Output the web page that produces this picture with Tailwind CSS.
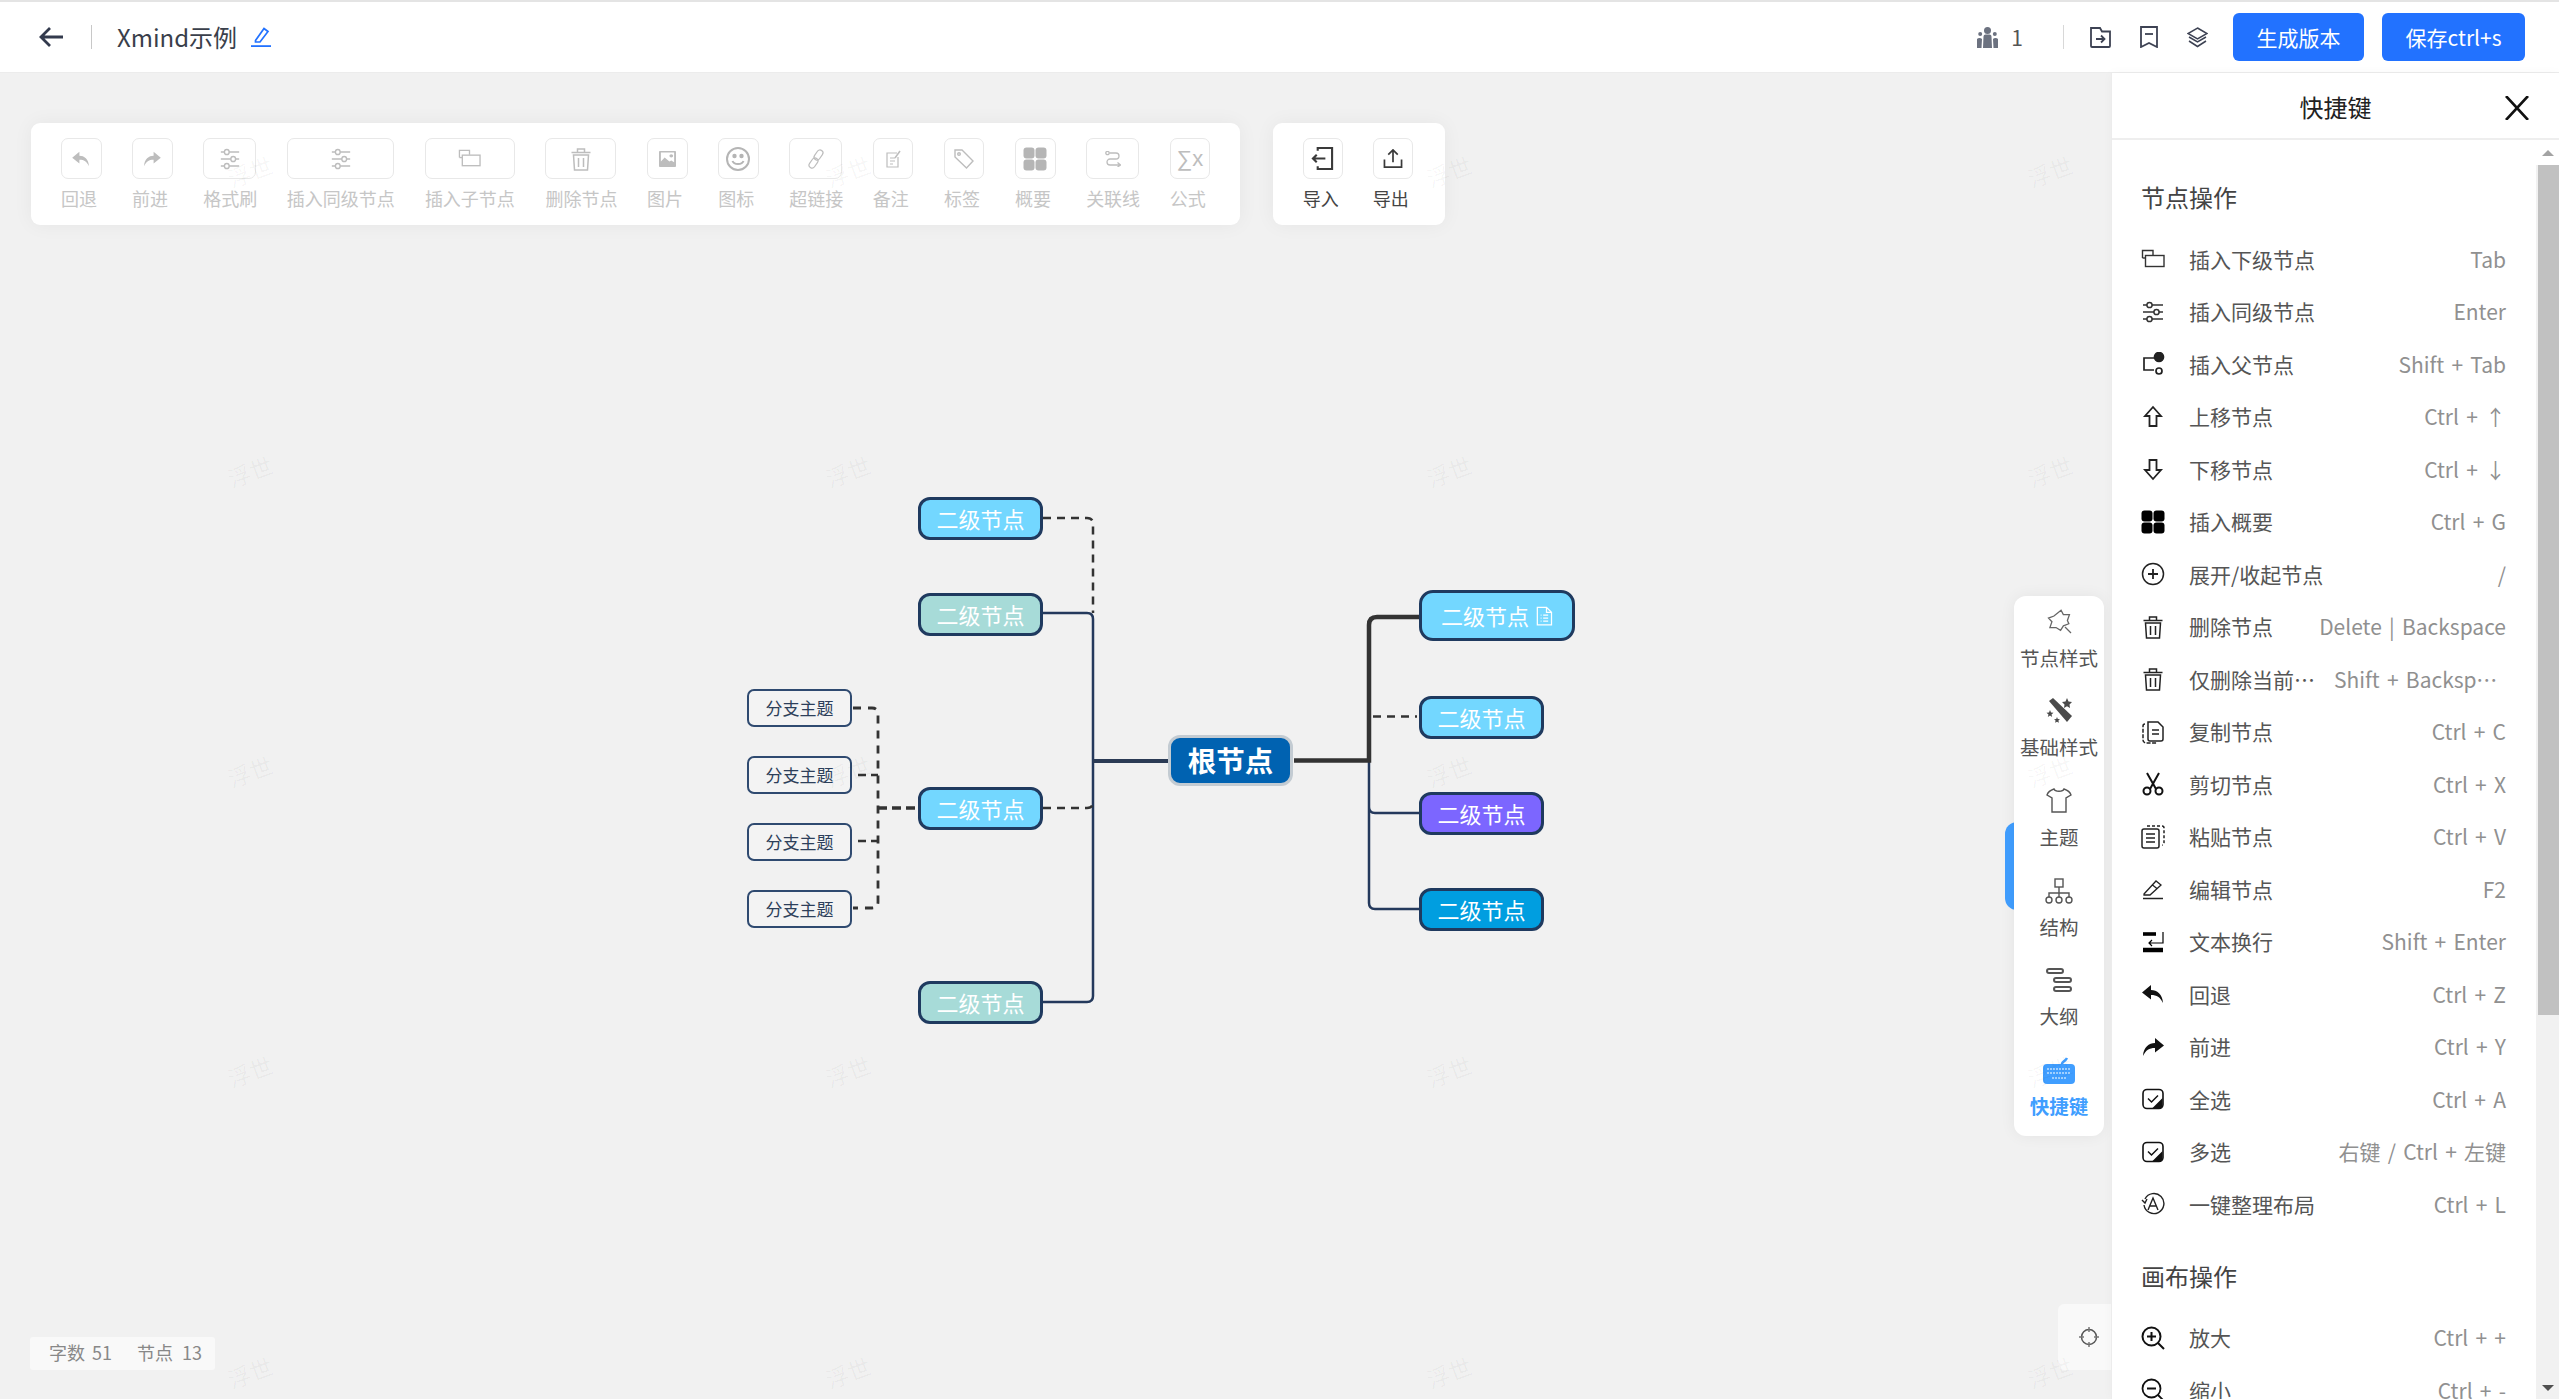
<!DOCTYPE html>
<html lang="zh-CN">
<head>
<meta charset="utf-8">
<title>Xmind示例</title>
<script src="https://cdn.jsdelivr.net/npm/@tailwindcss/browser@4"></script>
</head>
<body class="m-0">
<svg class="absolute w-0 h-0" aria-hidden="true">
  <defs>
    <symbol id="i-child" viewBox="0 0 24 24"><g fill="none" stroke="currentColor" stroke-width="1.400"><path d="M1.500 11V3.500H12V8"/><rect x="4.500" y="8.500" width="18.500" height="11"/><path d="M1.500 11h3"/></g></symbol>
    <symbol id="i-sliders" viewBox="0 0 24 24"><g fill="none" stroke="currentColor" stroke-width="1.500"><path d="M2 5h4M11 5h11M2 12h11M18 12h4M2 19h4M11 19h11"/><circle cx="8.500" cy="5" r="2.600"/><circle cx="15.500" cy="12" r="2.600"/><circle cx="8.500" cy="19" r="2.600"/></g></symbol>
    <symbol id="i-trash" viewBox="0 0 24 24"><g fill="none" stroke="currentColor" stroke-width="1.500"><path d="M2.500 5.500h19M8.500 5.500V2h7v3.500M4.500 8l1 15h13l1-15zM9.500 11v9M14.500 11v9"/></g></symbol>
    <symbol id="i-grid" viewBox="0 0 24 24"><g fill="currentColor"><rect x="0.500" y="0.500" width="11" height="11" rx="3"/><rect x="12.500" y="0.500" width="11" height="11" rx="3"/><rect x="0.500" y="12.500" width="11" height="11" rx="3"/><rect x="12.500" y="12.500" width="11" height="11" rx="3"/></g></symbol>
    <symbol id="i-undo" viewBox="0 0 24 20"><path fill="currentColor" d="M10 1 1 8.500l9 7V11c6 0 9 2 12 8C21.500 10 16 6 10 6z"/></symbol>
    <symbol id="i-redo" viewBox="0 0 24 20"><path fill="currentColor" d="M14 1l9 7.500-9 7V11c-6 0-9 2-12 8C2.500 10 8 6 14 6z"/></symbol>
    <symbol id="i-check" viewBox="0 0 24 24"><rect x="2" y="2.500" width="20" height="19" rx="4" fill="none" stroke="currentColor" stroke-width="1.600"/><path d="M7 11.500l3.500 3.500 6.500-6.500" fill="none" stroke="currentColor" stroke-width="1.500"/><path fill="currentColor" d="M21.500 11v7a3.500 3.500 0 0 1-3.500 3.500H11z"/></symbol>
    <symbol id="i-doc" viewBox="0 0 24 24"><path d="M4 1.500h11l6 6v15H4z M15 1.500v6h6 M8 11h1 M11 11h6 M8 14.500h1 M11 14.500h6 M8 18h1 M11 18h6" fill="none" stroke="currentColor" stroke-width="1.500"/></symbol>
  </defs>
</svg>

<div class="relative w-[2559px] h-[1399px] overflow-hidden flex flex-col bg-[#f1f1f1] border-t-2 border-[#e4e4e4] font-['Noto_Sans_CJK_SC','Noto_Sans',sans-serif]">

  <!-- header -->
  <header class="h-[71px] shrink-0 bg-white border-b border-[#ececec] flex items-center pl-[39px] pr-[34px] text-[#333]">
    <svg class="w-6 h-6 text-[#333a4d]" viewBox="0 0 24 24" fill="none" stroke="currentColor" stroke-width="2.800"><path d="M24 12H2M11 3l-9 9 9 9"/></svg>
    <span class="w-px h-6 bg-[#c8c8c8] ml-[28px]"></span>
    <span class="ml-[25px] text-[24px] leading-8 text-[#3a3f4b]">Xmind示例</span>
    <svg class="ml-[14px] w-5 h-5 text-[#2272ff]" viewBox="0 0 20 20" fill="none" stroke="currentColor" stroke-width="1.700"><path d="M4.500 13.500 13 1.500l4 3-8 10.500H4.500z"/><path d="M0 19.200h20" stroke-width="2"/></svg>

    <div class="ml-auto flex items-center">
      <svg class="w-[21px] h-[21px] text-[#6c7280]" viewBox="0 0 21 21" fill="currentColor"><circle cx="10.500" cy="3.500" r="3.500"/><path d="M6.500 9.500a2 2 0 0 1 2-2h4a2 2 0 0 1 2 2L15 21H6z"/><circle cx="3.200" cy="7" r="2"/><circle cx="17.800" cy="7" r="2"/><path d="M0 12a3 2.500 0 0 1 5 0l-.5 9H0zM16 12a3 2.500 0 0 1 5 0v9h-4.500z"/></svg>
      <span class="ml-[13px] text-[21px] leading-7 text-[#555]">1</span>
      <span class="ml-[40px] w-px h-6 bg-[#d8d8d8]"></span>
      <svg class="ml-[26px] w-[21px] h-[21px] text-[#3d4253]" viewBox="0 0 21 21" fill="none" stroke="currentColor" stroke-width="1.800"><path d="M1 1h9l2 3.500h8V19a1 1 0 0 1-1 1H2a1 1 0 0 1-1-1z"/><path d="M6 12h8M11 8.500l3.500 3.500-3.500 3.500"/></svg>
      <svg class="ml-[29px] w-[18px] h-[22px] text-[#3d4253]" viewBox="0 0 18 22" fill="none" stroke="currentColor" stroke-width="1.800"><path d="M1 1h16v20l-8-4-8 4z"/><path d="M5 8h8"/></svg>
      <svg class="ml-[29px] w-[21px] h-[21px] text-[#3d4253]" viewBox="0 0 21 21" fill="none" stroke="currentColor" stroke-width="1.500"><path d="M10.500 1 20 6.500 10.500 12 1 6.500z"/><path d="M2 10l8.500 5L19 10M2 14l8.500 5.500L19 14"/></svg>
      <button class="ml-[25px] w-[131px] h-[48px] rounded-[6px] bg-[#2272ff] text-white text-[21px] pt-[1px]">生成版本</button>
      <button class="ml-[18px] w-[143px] h-[48px] rounded-[6px] bg-[#2272ff] text-white text-[21px] pt-[1px]">保存ctrl+s</button>
    </div>
  </header>

  <div class="flex-1 min-h-0 flex">
    <!-- canvas -->
    <main class="relative flex-1 min-w-0 bg-[#f1f1f1]">
      <!-- connectors -->
      <svg class="absolute inset-0 w-[2111px] h-[1326px]" viewBox="0 73 2111 1326" fill="none">
        <path d="M1043 518h44q6 0 6 6v89" stroke="#333" stroke-width="2.500" stroke-dasharray="8 6"/>
        <path d="M1043 613h44q6 0 6 6v377q0 6-6 6h-44" stroke="#24395c" stroke-width="2.500"/>
        <path d="M1169 761h-76" stroke="#2b3b55" stroke-width="3.800"/>
        <path d="M1043 808h44q6 0 6-6" stroke="#333" stroke-width="2.500" stroke-dasharray="8 6"/>
        <path d="M853 708h19q6 0 6 6v188q0 6-6 6h-19" stroke="#333" stroke-width="2.800" stroke-dasharray="8 7"/>
        <path d="M858 775h20M858 841h20" stroke="#333" stroke-width="2.500" stroke-dasharray="8 5"/>
        <path d="M878 808h40" stroke="#333" stroke-width="3.500" stroke-dasharray="9 5"/>
        <path d="M1369 761v142q0 6 6 6h44M1369 761v46q0 6 6 6h44" stroke="#24395c" stroke-width="2.500"/>
        <path d="M1294 760.500h75V625q0-8 8-8h42" stroke="#333" stroke-width="4.500"/>
        <path d="M1373 716.500h44" stroke="#333" stroke-width="2.500" stroke-dasharray="8 6"/>
      </svg>

      <!-- nodes -->
      <div class="absolute left-[918px] top-[424px] w-[125px] h-[43px] rounded-[12px] border-[3px] border-[#1f3a5f] bg-[#73d7ff] text-white text-[22px] flex items-center justify-center">二级节点</div>
      <div class="absolute left-[918px] top-[520px] w-[125px] h-[43px] rounded-[12px] border-[3px] border-[#1f3a5f] bg-[#a7dbd8] text-white text-[22px] flex items-center justify-center">二级节点</div>
      <div class="absolute left-[918px] top-[714px] w-[125px] h-[43px] rounded-[12px] border-[3px] border-[#1f3a5f] bg-[#73d7ff] text-white text-[22px] flex items-center justify-center">二级节点</div>
      <div class="absolute left-[918px] top-[908px] w-[125px] h-[43px] rounded-[12px] border-[3px] border-[#1f3a5f] bg-[#a7dbd8] text-white text-[22px] flex items-center justify-center">二级节点</div>

      <div class="absolute left-[747px] top-[616px] w-[105px] h-[38px] rounded-[7px] border-2 border-[#2f4a70] bg-[#f3f3f3] text-[#2d3f5a] text-[17px] flex items-center justify-center">分支主题</div>
      <div class="absolute left-[747px] top-[683px] w-[105px] h-[38px] rounded-[7px] border-2 border-[#2f4a70] bg-[#f3f3f3] text-[#2d3f5a] text-[17px] flex items-center justify-center">分支主题</div>
      <div class="absolute left-[747px] top-[750px] w-[105px] h-[38px] rounded-[7px] border-2 border-[#2f4a70] bg-[#f3f3f3] text-[#2d3f5a] text-[17px] flex items-center justify-center">分支主题</div>
      <div class="absolute left-[747px] top-[817px] w-[105px] h-[38px] rounded-[7px] border-2 border-[#2f4a70] bg-[#f3f3f3] text-[#2d3f5a] text-[17px] flex items-center justify-center">分支主题</div>

      <div class="absolute left-[1168px] top-[662px] w-[125px] h-[51px] rounded-[12px] border-[3px] border-[#c3cbd2] bg-[#0062b1] text-white font-bold text-[28.500px] flex items-center justify-center">根节点</div>

      <div class="absolute left-[1419px] top-[517px] w-[156px] h-[51px] rounded-[14px] border-[3px] border-[#1f3a5f] bg-[#73d7ff] text-white text-[22px] flex items-center pl-[19px] gap-[5px]">二级节点<svg class="w-5 h-[22px]" viewBox="0 0 24 24"><use href="#i-doc"/></svg></div>
      <div class="absolute left-[1419px] top-[623px] w-[125px] h-[43px] rounded-[12px] border-[3px] border-[#1f3a5f] bg-[#73d7ff] text-white text-[22px] flex items-center justify-center">二级节点</div>
      <div class="absolute left-[1419px] top-[719px] w-[125px] h-[43px] rounded-[12px] border-[3px] border-[#1f3a5f] bg-[#7c66ff] text-white text-[22px] flex items-center justify-center">二级节点</div>
      <div class="absolute left-[1419px] top-[815px] w-[125px] h-[43px] rounded-[12px] border-[3px] border-[#1f3a5f] bg-[#009ee0] text-white text-[22px] flex items-center justify-center">二级节点</div>

      <!-- toolbars -->
      <div class="absolute left-[31px] top-[50px] flex gap-[32.500px]">
        <div class="h-[102px] rounded-[9px] bg-white shadow-[0_0_20px_rgba(0,0,0,0.05)] pl-[30px] pr-[30px] pt-[15px] flex gap-[30.600px] text-[18px] leading-6 text-[#c6c6c6]">
          <div class="w-[40.500px]"><div class="h-[41px] border border-[#e8e8e8] rounded-[7px] flex items-center justify-center text-[#bdbdbd]"><svg class="w-5 h-4" viewBox="0 0 24 20"><use href="#i-undo"/></svg></div><div class="mt-[7px] whitespace-nowrap">回退</div></div>
          <div class="w-[40.500px]"><div class="h-[41px] border border-[#e8e8e8] rounded-[7px] flex items-center justify-center text-[#bdbdbd]"><svg class="w-5 h-4" viewBox="0 0 24 20"><use href="#i-redo"/></svg></div><div class="mt-[7px] whitespace-nowrap">前进</div></div>
          <div class="w-[53px]"><div class="h-[41px] border border-[#e8e8e8] rounded-[7px] flex items-center justify-center text-[#bdbdbd]"><svg class="w-[22px] h-[24px]" viewBox="0 0 24 24" preserveAspectRatio="none"><use href="#i-sliders"/></svg></div><div class="mt-[7px] whitespace-nowrap">格式刷</div></div>
          <div class="w-[107.500px]"><div class="h-[41px] border border-[#e8e8e8] rounded-[7px] flex items-center justify-center text-[#bdbdbd]"><svg class="w-[22px] h-[24px]" viewBox="0 0 24 24" preserveAspectRatio="none"><use href="#i-sliders"/></svg></div><div class="mt-[7px] whitespace-nowrap">插入同级节点</div></div>
          <div class="w-[90px]"><div class="h-[41px] border border-[#e8e8e8] rounded-[7px] flex items-center justify-center text-[#bdbdbd]"><svg class="w-[23px] h-[23px]" viewBox="0 0 24 24"><use href="#i-child"/></svg></div><div class="mt-[7px] whitespace-nowrap">插入子节点</div></div>
          <div class="w-[71px]"><div class="h-[41px] border border-[#e8e8e8] rounded-[7px] flex items-center justify-center text-[#bdbdbd]"><svg class="w-6 h-6" viewBox="0 0 24 24"><use href="#i-trash"/></svg></div><div class="mt-[7px] whitespace-nowrap">删除节点</div></div>
          <div class="w-[40.500px]"><div class="h-[41px] border border-[#e8e8e8] rounded-[7px] flex items-center justify-center text-[#bdbdbd]"><svg class="w-[17px] h-[16px]" viewBox="0 0 18 20" preserveAspectRatio="none"><path fill="currentColor" fill-rule="evenodd" d="M1 0h16a1 1 0 0 1 1 1v18a1 1 0 0 1-1 1H1a1 1 0 0 1-1-1V1a1 1 0 0 1 1-1zM13 4a2 2 0 1 0 0 4 2 2 0 0 0 0-4zM2 13l4-5 5 5 2-1 3 2V2H2z"/></svg></div><div class="mt-[7px] whitespace-nowrap">图片</div></div>
          <div class="w-[40.500px]"><div class="h-[41px] border border-[#e8e8e8] rounded-[7px] flex items-center justify-center text-[#b5b5b5]"><svg class="w-6 h-6" viewBox="0 0 24 24" fill="none" stroke="currentColor" stroke-width="2"><circle cx="12" cy="12" r="11"/><path d="M6.500 14c1.500 4 9.500 4 11 0"/><circle cx="8.500" cy="9" r="1.200" fill="currentColor"/><circle cx="15.500" cy="9" r="1.200" fill="currentColor"/></svg></div><div class="mt-[7px] whitespace-nowrap">图标</div></div>
          <div class="w-[53px]"><div class="h-[41px] border border-[#e8e8e8] rounded-[7px] flex items-center justify-center text-[#bdbdbd]"><svg class="w-5 h-5" viewBox="0 0 20 20" fill="none" stroke="currentColor" stroke-width="1.200"><rect x="9.500" y="0.500" width="6" height="11" rx="3" transform="rotate(35 12.500 6)"/><rect x="4.500" y="8.500" width="6" height="11" rx="3" transform="rotate(35 7.500 14)"/></svg></div><div class="mt-[7px] whitespace-nowrap">超链接</div></div>
          <div class="w-[40.500px]"><div class="h-[41px] border border-[#e8e8e8] rounded-[7px] flex items-center justify-center text-[#bdbdbd]"><svg class="w-[15px] h-[18px]" viewBox="0 0 15 18" fill="none" stroke="currentColor" stroke-width="1.200"><path d="M11 3H1v14h11V7M4 8h5M4 11h5M4 14h3"/><path d="M14 1 9 8" stroke-width="1.500"/></svg></div><div class="mt-[7px] whitespace-nowrap">备注</div></div>
          <div class="w-[40.500px]"><div class="h-[41px] border border-[#e8e8e8] rounded-[7px] flex items-center justify-center text-[#bdbdbd]"><svg class="w-5 h-5" viewBox="0 0 20 20" fill="none" stroke="currentColor" stroke-width="1.400"><path d="M1 1h7l11 11-6.500 7L1 8z"/><circle cx="5" cy="5" r="1.300"/></svg></div><div class="mt-[7px] whitespace-nowrap">标签</div></div>
          <div class="w-[40.500px]"><div class="h-[41px] border border-[#e8e8e8] rounded-[7px] flex items-center justify-center text-[#b5b5b5]"><svg class="w-6 h-6" viewBox="0 0 24 24"><use href="#i-grid"/></svg></div><div class="mt-[7px] whitespace-nowrap">概要</div></div>
          <div class="w-[53px]"><div class="h-[41px] border border-[#e8e8e8] rounded-[7px] flex items-center justify-center text-[#bdbdbd]"><svg class="w-4 h-4" viewBox="0 0 16 16" fill="none" stroke="currentColor" stroke-width="1.300"><circle cx="2.500" cy="2" r="1.700"/><path d="M4.500 2H11a3 3 0 0 1 0 6H5a3 3 0 0 0 0 6h10M12.500 11.500l3 2.500-3 2"/></svg></div><div class="mt-[7px] whitespace-nowrap">关联线</div></div>
          <div class="w-[40.500px]"><div class="h-[41px] border border-[#e8e8e8] rounded-[7px] flex items-center justify-center text-[#bdbdbd] text-[22px] leading-none font-['Liberation_Sans',sans-serif]">∑x</div><div class="mt-[7px] whitespace-nowrap">公式</div></div>
        </div>
        <div class="h-[102px] w-[172px] rounded-[9px] bg-white shadow-[0_0_20px_rgba(0,0,0,0.05)] pl-[30px] pt-[15px] flex gap-[29.500px] text-[18px] leading-6 text-[#444]">
          <div class="w-[40.500px]"><div class="h-[41px] border border-[#e8e8e8] rounded-[7px] flex items-center justify-center"><svg class="w-[23px] h-[23px]" viewBox="0 0 24 24" fill="none" stroke="#3a3a3a" stroke-width="2.200"><path d="M7 4V1h15v22H7v-3M15 12H2M6 8l-4 4 4 4"/></svg></div><div class="mt-[7px] whitespace-nowrap">导入</div></div>
          <div class="w-[40.500px]"><div class="h-[41px] border border-[#e8e8e8] rounded-[7px] flex items-center justify-center"><svg class="w-5 h-[19px]" viewBox="0 0 20 20" fill="none" stroke="#3a3a3a" stroke-width="1.800"><path d="M10 14V1M5 6l5-5 5 5M1 11v8h18v-8"/></svg></div><div class="mt-[7px] whitespace-nowrap">导出</div></div>
        </div>
      </div>

      <!-- right rail -->
      <div class="absolute left-[2005px] top-[749px] w-[20px] h-[88px] rounded-l-[12px] bg-[#409eff]"></div>
      <nav class="absolute left-[2014px] top-[523px] w-[90px] h-[540px] rounded-[12px] bg-white shadow-[0_0_16px_rgba(0,0,0,0.06)] flex flex-col text-[19.500px] leading-6 text-[#555] text-center">
        <div class="h-[90px] flex flex-col items-center pt-[13px] gap-[11px]"><svg class="w-[26px] h-[26px]" viewBox="0 0 26 26" fill="none" stroke="#666" stroke-width="1.300"><path d="M13 1l3 4 6-1-1 6 2 3-5 3-2 5-5-2-6 1 1-6-4-3 5-3z" transform="rotate(10 13 13)"/><path d="M19 18l6 6"/></svg><span class="whitespace-nowrap">节点样式</span></div>
        <div class="h-[90px] flex flex-col items-center pt-[12px] gap-[11px]"><svg class="w-7 h-[26px]" viewBox="0 0 28 26" fill="#4a4a4a"><path d="M4 3l4-3 19 18-5 6z"/><path d="M22 0l1.500 3.500L27 4l-2.500 2.500.5 3.500-3-1.700-3 1.700.5-3.500L17 4l3.500-.5z"/><path d="M5 12l1 2.500 2.500.2-2 1.800.7 2.500L5 17.500 2.800 19l.7-2.500-2-1.800L4 14.500z"/><path d="M12 19l.8 2 2.200.2-1.600 1.400.5 2.200L12 23.700l-1.900 1.100.5-2.200L9 21.200l2.200-.2z"/></svg><span class="whitespace-nowrap">基础样式</span></div>
        <div class="h-[90px] flex flex-col items-center pt-[12px] gap-[12px]"><svg class="w-[26px] h-[25px]" viewBox="0 0 26 25" fill="none" stroke="#555" stroke-width="1.400"><path d="M8 1C9 4 17 4 18 1c3 1 6 3 7 6l-5 3v14H6V10L1 7c1-3 4-5 7-6z"/></svg><span>主题</span></div>
        <div class="h-[90px] flex flex-col items-center pt-[12px] gap-[11px]"><svg class="w-7 h-[26px]" viewBox="0 0 28 26" fill="none" stroke="#555" stroke-width="1.400"><rect x="10" y="1" width="8" height="8"/><path d="M14 9v6M4 19v-4h20v4M14 15v4"/><circle cx="4" cy="22" r="3"/><circle cx="14" cy="22" r="3"/><circle cx="24" cy="22" r="3"/></svg><span>结构</span></div>
        <div class="h-[90px] flex flex-col items-center pt-[12px] gap-[12px]"><svg class="w-[26px] h-[24px]" viewBox="0 0 26 24" fill="none" stroke="#555" stroke-width="2"><rect x="1" y="1" width="16" height="4" rx="2"/><rect x="8" y="10" width="17" height="4" rx="2"/><rect x="8" y="19" width="17" height="4" rx="2"/></svg><span>大纲</span></div>
        <div class="h-[90px] flex flex-col items-center pt-[11px] gap-[9px] text-[#409eff] font-bold"><svg class="w-[34px] h-[28px]" viewBox="0 0 34 28"><path d="M20 7c0-3 3-2 5-6" fill="none" stroke="#409eff" stroke-width="2.500"/><rect x="1" y="7" width="32" height="20" rx="4" fill="#409eff"/><path d="M5 12h24M5 16h24M10 21h14" stroke="#bfe0ff" stroke-width="1.500" stroke-dasharray="2 1"/></svg><span>快捷键</span></div>
      </nav>

      <!-- locate -->
      <div class="absolute left-[2058px] top-[1231px] w-[53px] h-[66px] rounded-l-[6px] bg-[#f9f9f9] flex items-center justify-center pl-[9px]"><svg class="w-[22px] h-[22px]" viewBox="0 0 22 22" fill="none" stroke="#555" stroke-width="1.500"><circle cx="11" cy="11" r="7.500"/><path d="M11 1v5M11 16v5M1 11h5M16 11h5" stroke="#777"/></svg></div>

      <!-- stats -->
      <div class="absolute left-[30px] top-[1264px] w-[185px] h-[33px] rounded-[3px] bg-[#f9f9f9] text-[18px] text-[#888] flex items-center pl-[19px] pb-[2px]"><span>字数</span><span class="ml-[7px]">51</span><span class="ml-[25px]">节点</span><span class="ml-[9px]">13</span></div>

      <!-- watermarks -->
      <div class="absolute inset-0 pointer-events-none text-[23px] leading-none text-black/[0.04]">
        <span class="absolute left-[227px] top-[87px] -rotate-20">浮世</span><span class="absolute left-[825px] top-[87px] -rotate-20">浮世</span><span class="absolute left-[1426px] top-[87px] -rotate-20">浮世</span><span class="absolute left-[2027px] top-[87px] -rotate-20">浮世</span>
        <span class="absolute left-[227px] top-[387px] -rotate-20">浮世</span><span class="absolute left-[825px] top-[387px] -rotate-20">浮世</span><span class="absolute left-[1426px] top-[387px] -rotate-20">浮世</span><span class="absolute left-[2027px] top-[387px] -rotate-20">浮世</span>
        <span class="absolute left-[227px] top-[687px] -rotate-20">浮世</span><span class="absolute left-[825px] top-[687px] -rotate-20">浮世</span><span class="absolute left-[1426px] top-[687px] -rotate-20">浮世</span><span class="absolute left-[2027px] top-[687px] -rotate-20">浮世</span>
        <span class="absolute left-[227px] top-[987px] -rotate-20">浮世</span><span class="absolute left-[825px] top-[987px] -rotate-20">浮世</span><span class="absolute left-[1426px] top-[987px] -rotate-20">浮世</span><span class="absolute left-[2027px] top-[987px] -rotate-20">浮世</span>
        <span class="absolute left-[227px] top-[1288px] -rotate-20">浮世</span><span class="absolute left-[825px] top-[1288px] -rotate-20">浮世</span><span class="absolute left-[1426px] top-[1288px] -rotate-20">浮世</span><span class="absolute left-[2027px] top-[1288px] -rotate-20">浮世</span>
      </div>
    </main>

    <!-- shortcut panel -->
    <aside class="w-[448px] shrink-0 bg-white border-l border-[#ececec] flex flex-col shadow-[0_0_10px_rgba(0,0,0,0.03)] z-10">
      <div class="h-[67px] shrink-0 border-b-2 border-[#eeeeee] relative flex items-center justify-center pt-[2px] text-[24px] text-[#222]">
        快捷键
        <svg class="absolute left-[393px] top-[23px] w-6 h-6" viewBox="0 0 24 24" fill="none" stroke="#111" stroke-width="2.600"><path d="M1 0l22 24M23 0 1 24"/></svg>
      </div>
      <div class="flex-1 min-h-0 flex">
        <div class="flex-1 min-w-0 overflow-hidden pl-[29px] pr-[30px] pt-[39px] [&_li>span:last-child]:[word-spacing:2.500px]">
          <h2 class="h-[36px] mb-[18px] text-[24px] leading-9 font-normal text-[#444]">节点操作</h2>
          <ul class="text-[21px] text-[#555]">
            <li class="h-[52.500px] flex items-center"><svg class="w-6 h-6 shrink-0 text-[#333]" viewBox="0 0 24 24"><use href="#i-child"/></svg><span class="ml-6 max-w-[135px] truncate">插入下级节点</span><span class="ml-auto text-[#909090]">Tab</span></li>
            <li class="h-[52.500px] flex items-center"><svg class="w-6 h-6 shrink-0 text-[#333]" viewBox="0 0 24 24"><use href="#i-sliders"/></svg><span class="ml-6 max-w-[135px] truncate">插入同级节点</span><span class="ml-auto text-[#909090]">Enter</span></li>
            <li class="h-[52.500px] flex items-center"><svg class="w-6 h-6 shrink-0 text-[#222]" viewBox="0 0 24 24" fill="none" stroke="currentColor" stroke-width="1.700"><path d="M14 6H3v12h10"/><circle cx="18" cy="5" r="4.500" fill="currentColor"/><circle cx="18" cy="19" r="3"/></svg><span class="ml-6 max-w-[135px] truncate">插入父节点</span><span class="ml-auto text-[#909090]">Shift + Tab</span></li>
            <li class="h-[52.500px] flex items-center"><svg class="w-6 h-6 shrink-0 text-[#222]" viewBox="0 0 24 24" fill="none" stroke="currentColor" stroke-width="1.800"><path d="M12 2l8 9h-4.500v10h-7V11H4z"/></svg><span class="ml-6 max-w-[135px] truncate">上移节点</span><span class="ml-auto text-[#909090]">Ctrl + ↑</span></li>
            <li class="h-[52.500px] flex items-center"><svg class="w-6 h-6 shrink-0 text-[#222]" viewBox="0 0 24 24" fill="none" stroke="currentColor" stroke-width="1.800"><path d="M12 22l8-9h-4.500V3h-7v10H4z"/></svg><span class="ml-6 max-w-[135px] truncate">下移节点</span><span class="ml-auto text-[#909090]">Ctrl + ↓</span></li>
            <li class="h-[52.500px] flex items-center"><svg class="w-6 h-6 shrink-0 text-black" viewBox="0 0 24 24"><use href="#i-grid"/></svg><span class="ml-6 max-w-[135px] truncate">插入概要</span><span class="ml-auto text-[#909090]">Ctrl + G</span></li>
            <li class="h-[52.500px] flex items-center"><svg class="w-6 h-6 shrink-0 text-[#222]" viewBox="0 0 24 24" fill="none" stroke="currentColor" stroke-width="1.500"><circle cx="12" cy="12" r="10.500"/><path d="M12 7v10M7 12h10" stroke-width="1.800"/></svg><span class="ml-6 max-w-[135px] truncate">展开/收起节点</span><span class="ml-auto text-[#909090]">/</span></li>
            <li class="h-[52.500px] flex items-center"><svg class="w-6 h-6 shrink-0 text-[#222]" viewBox="0 0 24 24"><use href="#i-trash"/></svg><span class="ml-6 max-w-[135px] truncate">删除节点</span><span class="ml-auto text-[#909090]">Delete | Backspace</span></li>
            <li class="h-[52.500px] flex items-center"><svg class="w-6 h-6 shrink-0 text-[#222]" viewBox="0 0 24 24"><use href="#i-trash"/></svg><span class="ml-6 max-w-[135px] truncate">仅删除当前节点</span><span class="ml-auto mr-[6px] w-[166px] truncate text-[#909090]">Shift + Backspace</span></li>
            <li class="h-[52.500px] flex items-center"><svg class="w-6 h-6 shrink-0 text-[#222]" viewBox="0 0 24 24" fill="none" stroke="currentColor" stroke-width="1.500"><path d="M7 2h10l5 5v12a2 2 0 0 1-2 2H9a2 2 0 0 1-2-2zM11 10h7M11 14h7"/><path d="M4 4a2 2 0 0 0-2 2v14a3 3 0 0 0 3 3h11" stroke-dasharray="4 1.500"/></svg><span class="ml-6 max-w-[135px] truncate">复制节点</span><span class="ml-auto text-[#909090]">Ctrl + C</span></li>
            <li class="h-[52.500px] flex items-center"><svg class="w-6 h-6 shrink-0 text-[#111]" viewBox="0 0 24 24" fill="none" stroke="currentColor" stroke-width="2"><path d="M6 1l9 16M18 1 9 17"/><circle cx="6" cy="19" r="3.500"/><circle cx="18" cy="19" r="3.500"/></svg><span class="ml-6 max-w-[135px] truncate">剪切节点</span><span class="ml-auto text-[#909090]">Ctrl + X</span></li>
            <li class="h-[52.500px] flex items-center"><svg class="w-6 h-6 shrink-0 text-[#222]" viewBox="0 0 24 24" fill="none" stroke="currentColor" stroke-width="1.500"><rect x="1" y="4" width="17" height="19" rx="2"/><path d="M5 9h9M5 13h9M5 17h9"/><path d="M6 1h15a2 2 0 0 1 2 2v15a2 2 0 0 1-2 2" stroke-dasharray="3 2"/></svg><span class="ml-6 max-w-[135px] truncate">粘贴节点</span><span class="ml-auto text-[#909090]">Ctrl + V</span></li>
            <li class="h-[52.500px] flex items-center"><svg class="w-6 h-6 shrink-0 text-[#222]" viewBox="0 0 24 24" fill="none" stroke="currentColor" stroke-width="1.300"><path d="M3 17 15 4l5 4-11 10H3zM11.500 8l5 4"/><path d="M2 21.500h20" stroke-width="1.500"/></svg><span class="ml-6 max-w-[135px] truncate">编辑节点</span><span class="ml-auto text-[#909090]">F2</span></li>
            <li class="h-[52.500px] flex items-center"><svg class="w-6 h-6 shrink-0 text-black" viewBox="0 0 24 24" fill="none" stroke="currentColor"><path d="M2 4h13" stroke-width="3.600"/><path d="M2 20h20" stroke-width="4.500"/><path d="M22 2v11H8M11 10l-3 3 3 3" stroke-width="1.200"/></svg><span class="ml-6 max-w-[135px] truncate">文本换行</span><span class="ml-auto text-[#909090]">Shift + Enter</span></li>
            <li class="h-[52.500px] flex items-center"><svg class="w-6 h-6 shrink-0 text-[#111]" viewBox="0 0 24 24"><use href="#i-undo"/></svg><span class="ml-6 max-w-[135px] truncate">回退</span><span class="ml-auto text-[#909090]">Ctrl + Z</span></li>
            <li class="h-[52.500px] flex items-center"><svg class="w-6 h-6 shrink-0 text-[#111]" viewBox="0 0 24 24"><use href="#i-redo"/></svg><span class="ml-6 max-w-[135px] truncate">前进</span><span class="ml-auto text-[#909090]">Ctrl + Y</span></li>
            <li class="h-[52.500px] flex items-center"><svg class="w-6 h-6 shrink-0 text-[#111]" viewBox="0 0 24 24"><use href="#i-check"/></svg><span class="ml-6 max-w-[135px] truncate">全选</span><span class="ml-auto text-[#909090]">Ctrl + A</span></li>
            <li class="h-[52.500px] flex items-center"><svg class="w-6 h-6 shrink-0 text-[#111]" viewBox="0 0 24 24"><use href="#i-check"/></svg><span class="ml-6 max-w-[135px] truncate">多选</span><span class="ml-auto text-[#909090]">右键 / Ctrl + 左键</span></li>
            <li class="h-[52.500px] flex items-center"><svg class="w-6 h-6 shrink-0 text-[#222]" viewBox="0 0 24 24" fill="none" stroke="currentColor" stroke-width="1.400"><path d="M4 7a10 10 0 1 1-1 6M1 8l3 3 2-4"/><path d="M7 18l5-12 5 12M9 14h6"/></svg><span class="ml-6 max-w-[135px] truncate">一键整理布局</span><span class="ml-auto text-[#909090]">Ctrl + L</span></li>
          </ul>
          <h2 class="mt-[27px] h-[36px] mb-[18px] text-[24px] leading-9 font-normal text-[#444]">画布操作</h2>
          <ul class="text-[21px] text-[#555]">
            <li class="h-[52.500px] flex items-center"><svg class="w-6 h-6 shrink-0 text-[#111]" viewBox="0 0 24 24" fill="none" stroke="currentColor" stroke-width="2"><circle cx="10.500" cy="10.500" r="9"/><path d="M17 17l6 6M10.500 6v9M6 10.500h9"/></svg><span class="ml-6 max-w-[135px] truncate">放大</span><span class="ml-auto text-[#909090]">Ctrl + +</span></li>
            <li class="h-[52.500px] flex items-center"><svg class="w-6 h-6 shrink-0 text-[#111]" viewBox="0 0 24 24" fill="none" stroke="currentColor" stroke-width="1.800"><circle cx="10.500" cy="10.500" r="9"/><path d="M17 17l6 6M6 10.500h9"/></svg><span class="ml-6 max-w-[135px] truncate">缩小</span><span class="ml-auto text-[#909090]">Ctrl + -</span></li>
          </ul>
        </div>
        <!-- scrollbar -->
        <div class="w-[23px] shrink-0 bg-[#f1f1f1] flex flex-col items-end">
          <div class="w-full h-[25px] bg-white flex items-center justify-center"><span class="w-0 h-0 border-x-[6px] border-x-transparent border-b-[6px] border-b-[#a3a3a3]"></span></div>
          <div class="w-[21px] h-[850px] bg-[#c1c1c1]"></div>
          <div class="mt-auto w-full h-[23px] flex items-center justify-center"><span class="w-0 h-0 border-x-[6px] border-x-transparent border-t-[6px] border-t-[#505050]"></span></div>
        </div>
      </div>
    </aside>
  </div>
</div>
</body>
</html>
